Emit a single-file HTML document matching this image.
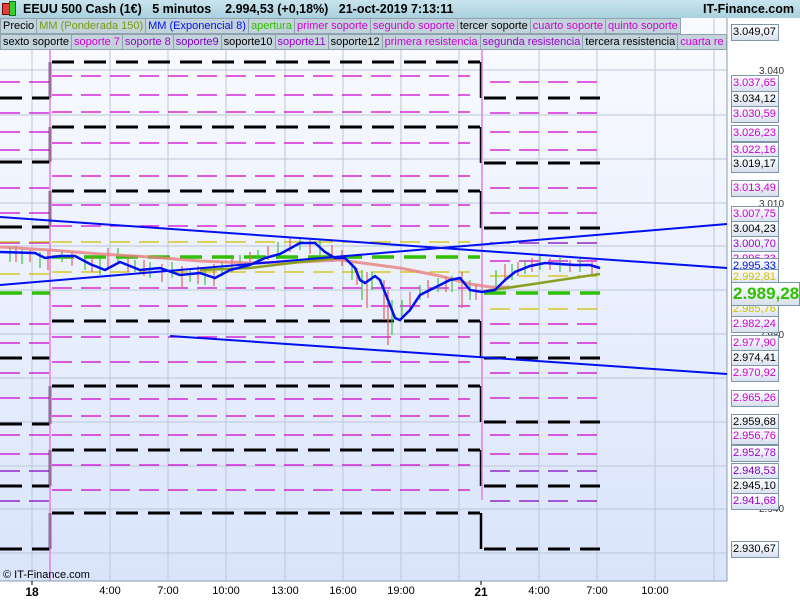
<!DOCTYPE html>
<html><head><meta charset="utf-8"><style>
body{margin:0;width:800px;height:600px;overflow:hidden;background:#fff;font-family:"Liberation Sans",sans-serif;}
#hdr{position:absolute;left:0;top:0;width:800px;height:18px;background:linear-gradient(#c9e4ee,#a9d0de);font-size:12.5px;font-weight:bold;line-height:18px;}
.leg{position:absolute;left:0;height:16px;font-size:11px;line-height:15px;white-space:nowrap;}
.leg span{display:inline-block;background:#c3d3dc;border:1px solid #8ea3ad;padding:0 2px;margin-right:-1px;height:14px;}
.lab{position:absolute;left:731px;width:45px;height:15px;border:1px solid #7e97a8;background:linear-gradient(#fff,#d8e0ef);font-size:11px;line-height:15px;text-align:left;padding-left:1px;}
.bx{position:absolute;top:585px;font-size:11px;transform:translateX(-50%);}
</style></head><body>
<div id="hdr"><span style="position:absolute;left:2px;top:3px;width:6px;height:10px;background:#e04040;border:1px solid #700"></span><span style="position:absolute;left:9px;top:1px;width:5px;height:13px;background:#30d030;border:1px solid #070"></span><span style="position:absolute;left:23px">EEUU 500 Cash (1€) &nbsp; 5 minutos &nbsp; &nbsp;2.994,53 (+0,18%) &nbsp; 21-oct-2019 7:13:11</span><span style="position:absolute;right:6px;">IT-Finance.com</span></div>
<svg width="800" height="600" style="position:absolute;left:0;top:0" xmlns="http://www.w3.org/2000/svg">
<defs><linearGradient id="bg" x1="0" y1="0" x2="0" y2="1"><stop offset="0" stop-color="#fafbff"/><stop offset="1" stop-color="#d9e4fb"/></linearGradient></defs>
<rect x="0" y="18" width="727" height="563" fill="url(#bg)"/>
<g stroke="#bcc7d8" stroke-width="1">
<line x1="32" y1="18" x2="32" y2="581"/><line x1="110" y1="18" x2="110" y2="581"/><line x1="168" y1="18" x2="168" y2="581"/><line x1="226" y1="18" x2="226" y2="581"/><line x1="285" y1="18" x2="285" y2="581"/><line x1="343" y1="18" x2="343" y2="581"/><line x1="401" y1="18" x2="401" y2="581"/><line x1="459" y1="18" x2="459" y2="581"/><line x1="539" y1="18" x2="539" y2="581"/><line x1="597" y1="18" x2="597" y2="581"/><line x1="655" y1="18" x2="655" y2="581"/><line x1="714" y1="18" x2="714" y2="581"/>
<line x1="0" y1="70" x2="727" y2="70"/><line x1="0" y1="115" x2="727" y2="115"/><line x1="0" y1="159" x2="727" y2="159"/><line x1="0" y1="203" x2="727" y2="203"/><line x1="0" y1="246" x2="727" y2="246"/><line x1="0" y1="290" x2="727" y2="290"/><line x1="0" y1="334" x2="727" y2="334"/><line x1="0" y1="378" x2="727" y2="378"/><line x1="0" y1="422" x2="727" y2="422"/><line x1="0" y1="466" x2="727" y2="466"/><line x1="0" y1="509" x2="727" y2="509"/><line x1="0" y1="553" x2="727" y2="553"/>
</g>
<line x1="727" y1="18" x2="727" y2="581" stroke="#8a9bb0"/>
<g stroke="#d000d0" stroke-width="1.3" stroke-dasharray="20 9" fill="none">
<path d="M0 82H50M0 113H50M0 132H50M0 150H50M0 188H50M0 213H50M0 243H50M0 324H50M0 343H50M0 373H50M0 398H50M0 435H50M0 454H50"/>
<path d="M52 76H470M52 95H470M52 112H470M52 143H470M52 176H470M52 205H470M52 226H470M52 288H470M52 306H470M52 337H470M52 362H470M52 399H470M52 416H470M52 435H470M52 465H470M52 490H470"/>
<path d="M490 82H600M490 113H600M490 132H600M490 150H600M490 188H600M490 213H600M490 261H600M490 324H600M490 343H600M490 373H600M490 398H600M490 435H600M490 454H600"/>
</g>
<g stroke="#8000c0" stroke-width="1.3" stroke-dasharray="20 9" fill="none"><path d="M490 243H600M490 471H600M490 501H600M0 471H50M0 501H50"/></g>
<g stroke="#d0c000" stroke-width="1.3" stroke-dasharray="20 9" fill="none"><path d="M0 242H50M0 274H50M52 242H470M52 272H470M490 276H600M490 309H600"/></g>
<g stroke="#000" stroke-width="3" stroke-dasharray="22 10" fill="none">
<path d="M0 98H50M0 162H50M0 227H50M0 358H50M0 424H50M0 486H50M0 549H50"/>
<path d="M52 62H480M52 127H480M52 191H480M52 321H480M52 386H480M52 450H480M52 513H480"/>
<path d="M484 98H600M484 163H600M484 228H600M484 358H600M484 422H600M484 486H600M484 549H600"/>
</g>
<g stroke="#000" stroke-width="2.5"><path d="M50 98V62M50 162V127M50 227V191M50 549V513M50 486V450M50 424V386M481 62V98M481 127V163M481 191V228M481 321V358M481 386V422M481 450V486M481 513V549"/></g>
<line x1="50" y1="50" x2="50" y2="581" stroke="#e080e0" stroke-width="1.5"/>
<line x1="482" y1="50" x2="482" y2="500" stroke="#e080e0" stroke-width="1.5"/>
<g stroke="#30c000" stroke-width="3.5" stroke-dasharray="22 10" fill="none"><path d="M0 293H50M52 257H480M484 293H600"/></g>
<g stroke-width="1.2">
<path stroke="#40c040" d="M10 248V262M22 250V264M40 252V268M62 250V262M85 255V270M100 258V275M118 248V262M135 260V272M150 262V278M172 262V278M190 268V282M205 268V285M222 262V276M240 255V268M258 250V264M278 242V256M300 238V250M320 240V255M352 262V280M362 270V300M372 272V290M392 300V335M402 300V318M420 285V300M438 278V292M452 276V292M470 280V300M496 270V292M512 264V280M525 260V274M540 256V270M560 258V272M580 258V272"/>
<path stroke="#e06060" d="M16 246V262M30 250V262M48 250V270M72 252V266M92 256V272M108 248V268M128 258V272M144 260V276M162 264V282M182 266V288M198 266V284M214 264V286M232 258V272M250 252V266M268 246V260M290 238V252M310 238V254M332 245V262M342 250V266M357 268V285M367 272V308M384 280V320M388 290V345M410 292V312M428 280V298M446 276V292M462 272V308M476 284V300M505 264V282M518 262V276M532 258V272M550 258V270M570 260V272M592 262V274"/>
</g>
<polyline fill="none" stroke="#e88080" stroke-width="3" stroke-opacity=".8" points="0,247 50,250 100,254 150,257 200,261 250,263 300,262 340,260 400,268 440,276 470,284 490,287 510,287"/>
<polyline fill="none" stroke="#8aa020" stroke-width="2.5" points="200,270 250,268 300,262 340,258"/>
<polyline fill="none" stroke="#8aa020" stroke-width="2.5" points="484,291 500,289 540,283 600,274"/>
<polyline fill="none" stroke="#0010f0" stroke-width="2.5" points="0,252 35,253 45,258 60,256 75,256 90,264 105,270 120,262 140,270 160,268 180,275 200,273 215,278 230,270 250,265 265,258 280,254 300,243 315,243 325,252 335,258 345,258 355,268 360,280 365,283 375,276 380,280 388,300 395,318 400,320 410,310 420,295 430,290 440,285 450,280 460,278 470,290 482,292 495,290 505,280 515,272 530,266 545,263 560,264 575,265 590,265 600,268"/>
<g stroke="#0010f0" stroke-width="2"><line x1="0" y1="217" x2="727" y2="268"/><line x1="0" y1="285" x2="727" y2="224"/><line x1="170" y1="336" x2="727" y2="374"/></g>
<text x="3" y="578" font-size="11" font-family="Liberation Sans">© IT-Finance.com</text>
<line x1="0" y1="581" x2="727" y2="581" stroke="#8a9bb0"/>
<g stroke="#000"><line x1="32" y1="581" x2="32" y2="585"/><line x1="481" y1="581" x2="481" y2="585"/></g>
<g font-size="10" fill="#333" font-family="Liberation Sans"><text x="759" y="74">3.040</text><text x="759" y="207">3.010</text><text x="759" y="338">2.980</text><text x="759" y="512">2.940</text></g>
</svg>
<div class="leg" style="top:18px"><span>Precio</span><span style="color:#7a9a10">MM (Ponderada 150)</span><span style="color:#0010f0">MM (Exponencial 8)</span><span style="color:#30c000">apertura</span><span style="color:#d000d0">primer soporte</span><span style="color:#d000d0">segundo soporte</span><span>tercer soporte</span><span style="color:#d000d0">cuarto soporte</span><span style="color:#d000d0">quinto soporte</span></div>
<div class="leg" style="top:34px"><span>sexto soporte</span><span style="color:#d000d0">soporte 7</span><span style="color:#a000d0">soporte 8</span><span style="color:#8000c0">soporte9</span><span>soporte10</span><span style="color:#a000d0">soporte11</span><span>soporte12</span><span style="color:#d000d0">primera resistencia</span><span style="color:#a000d0">segunda resistencia</span><span>tercera resistencia</span><span style="color:#d000d0">cuarta re</span></div>
<div class="lab" style="top:24px">3.049,07</div>
<div class="lab" style="top:75px;color:#d000d0">3.037,65</div>
<div class="lab" style="top:91px">3.034,12</div>
<div class="lab" style="top:106px;color:#d000d0">3.030,59</div>
<div class="lab" style="top:125px;color:#d000d0">3.026,23</div>
<div class="lab" style="top:142px;color:#d000d0">3.022,16</div>
<div class="lab" style="top:156px">3.019,17</div>
<div class="lab" style="top:180px;color:#d000d0">3.013,49</div>
<div class="lab" style="top:206px;color:#d000d0">3.007,75</div>
<div class="lab" style="top:221px">3.004,23</div>
<div class="lab" style="top:236px;color:#a000d0">3.000,70</div>
<div class="lab" style="top:251px;color:#d000d0">2.996,33</div>
<div class="lab" style="top:258px;color:#0010f0">2.995,33</div>
<div class="lab" style="top:269px;color:#d0c000">2.992,81</div>
<div class="lab" style="top:301px;color:#d0c000">2.985,76</div>
<div class="lab" style="top:316px;color:#d000d0">2.982,24</div>
<div class="lab" style="top:335px;color:#d000d0">2.977,90</div>
<div class="lab" style="top:350px">2.974,41</div>
<div class="lab" style="top:365px;color:#d000d0">2.970,92</div>
<div class="lab" style="top:390px;color:#d000d0">2.965,26</div>
<div class="lab" style="top:414px">2.959,68</div>
<div class="lab" style="top:428px;color:#d000d0">2.956,76</div>
<div class="lab" style="top:445px;color:#a000d0">2.952,78</div>
<div class="lab" style="top:463px;color:#8000c0">2.948,53</div>
<div class="lab" style="top:478px">2.945,10</div>
<div class="lab" style="top:493px;color:#a000d0">2.941,68</div>
<div class="lab" style="top:541px">2.930,67</div>
<div class="lab" style="top:282px;width:66px;height:22px;font-size:17px;line-height:22px;font-weight:bold;color:#30c000">2.989,28</div>
<div class="bx" style="left:32px;font-weight:bold;font-size:12px">18</div>
<div class="bx" style="left:110px">4:00</div><div class="bx" style="left:168px">7:00</div><div class="bx" style="left:226px">10:00</div><div class="bx" style="left:285px">13:00</div><div class="bx" style="left:343px">16:00</div><div class="bx" style="left:401px">19:00</div>
<div class="bx" style="left:481px;font-weight:bold;font-size:12px">21</div>
<div class="bx" style="left:539px">4:00</div><div class="bx" style="left:597px">7:00</div><div class="bx" style="left:655px">10:00</div>
</body></html>
